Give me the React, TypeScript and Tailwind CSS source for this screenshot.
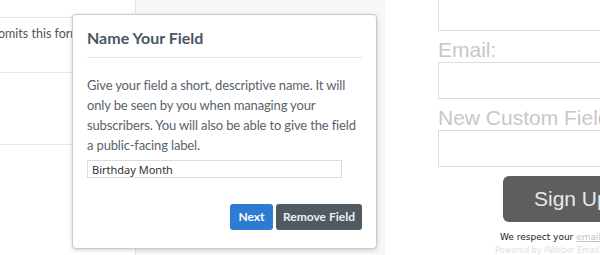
export default function App() {
  return (
    <div className="relative h-[255px] w-[600px] overflow-hidden bg-white font-['Lato',sans-serif]">
      <div className="flex h-full">
        {/* left settings column */}
        <div className="flex w-[136px] shrink-0 flex-col border-r border-[#e3e3e3] bg-white">
          <div className="h-[18px] border-b border-[#e8e8e8]" />
          <div className="h-[55px] border-b border-[#e8e8e8] pt-[7px]">
            <p className="ml-[-2px] whitespace-nowrap text-[12.5px] leading-[18px] text-[#555]">omits this form:</p>
          </div>
          <div className="h-[72px] border-b border-[#e8e8e8]" />
        </div>

        {/* grey canvas */}
        <div className="w-[249px] shrink-0 bg-[#f7f7f7]" />

        {/* form preview */}
        <div className="flex flex-1 flex-col pl-[53px] font-['Liberation_Sans',Arial,sans-serif]">
          <div className="mt-[-6px] h-[37px] w-[220px] shrink-0 border border-[#dcdcdc]" />
          <label className="mt-[6px] whitespace-nowrap text-[21px] leading-[25px] text-[#c8c8c8]">Email:</label>
          <div className="h-[37px] w-[220px] shrink-0 border border-[#dcdcdc]" />
          <label className="mt-[6px] whitespace-nowrap text-[21px] leading-[25px] text-[#c8c8c8]">New Custom Field</label>
          <div className="h-[37px] w-[220px] shrink-0 border border-[#dcdcdc]" />
          <div className="ml-[65px] mt-[9px] flex h-[46px] w-[150px] shrink-0 items-center rounded-[6px] bg-[#5e5e5e] pl-[31px]">
            <span className="whitespace-nowrap text-[21px] text-[#e8e8e8]">Sign Up</span>
          </div>
          <p className="ml-[62px] mt-[9px] whitespace-nowrap font-['DejaVu_Sans',Verdana,sans-serif] text-[9px] leading-[12px] text-[#1a1a1a]">
            We respect your <span className="text-[#c4c4c4] underline">email privacy</span>
          </p>
          <p className="ml-[57px] mt-[3px] whitespace-nowrap font-['DejaVu_Sans',Verdana,sans-serif] text-[8px] leading-[10px] text-[#e0e0e0]">
            Powered by AWeber Email Marketing
          </p>
        </div>
      </div>

      {/* popover */}
      <div className="absolute left-[72px] top-[14px] flex h-[235px] w-[305px] flex-col rounded-[4px] border border-[#c9cccf] bg-white px-[14px] pb-[18px] shadow-[0_1px_4px_rgba(0,0,0,0.18)]">
        <h2 className="border-b border-[#e2e4e6] pb-[9px] pt-[13px] text-[16px] font-bold leading-[20px] text-[#4a5663]">
          Name Your Field
        </h2>
        <p className="mt-[17px] text-[13px] leading-[20px] tracking-[-0.15px] text-[#58636d]">
          Give your field a short, descriptive name. It will only be seen by you when managing your subscribers. You will also be able to give the field a public-facing label.
        </p>
        <input
          defaultValue="Birthday Month"
          className="mt-[5px] h-[18px] w-[255px] border border-[#dcdcdc] px-[4px] font-['Noto_Sans',sans-serif] text-[11px] text-[#333] outline-none"
        />
        <div className="mt-auto flex justify-end gap-[3px]">
          <button className="h-[26px] w-[43px] rounded-[3px] bg-[#2f7bd2] text-[12px] font-bold text-white">Next</button>
          <button className="h-[26px] w-[86px] rounded-[3px] bg-[#4f5a61] text-[12px] font-bold text-[#eef0f1]">Remove Field</button>
        </div>
      </div>
    </div>
  );
}
